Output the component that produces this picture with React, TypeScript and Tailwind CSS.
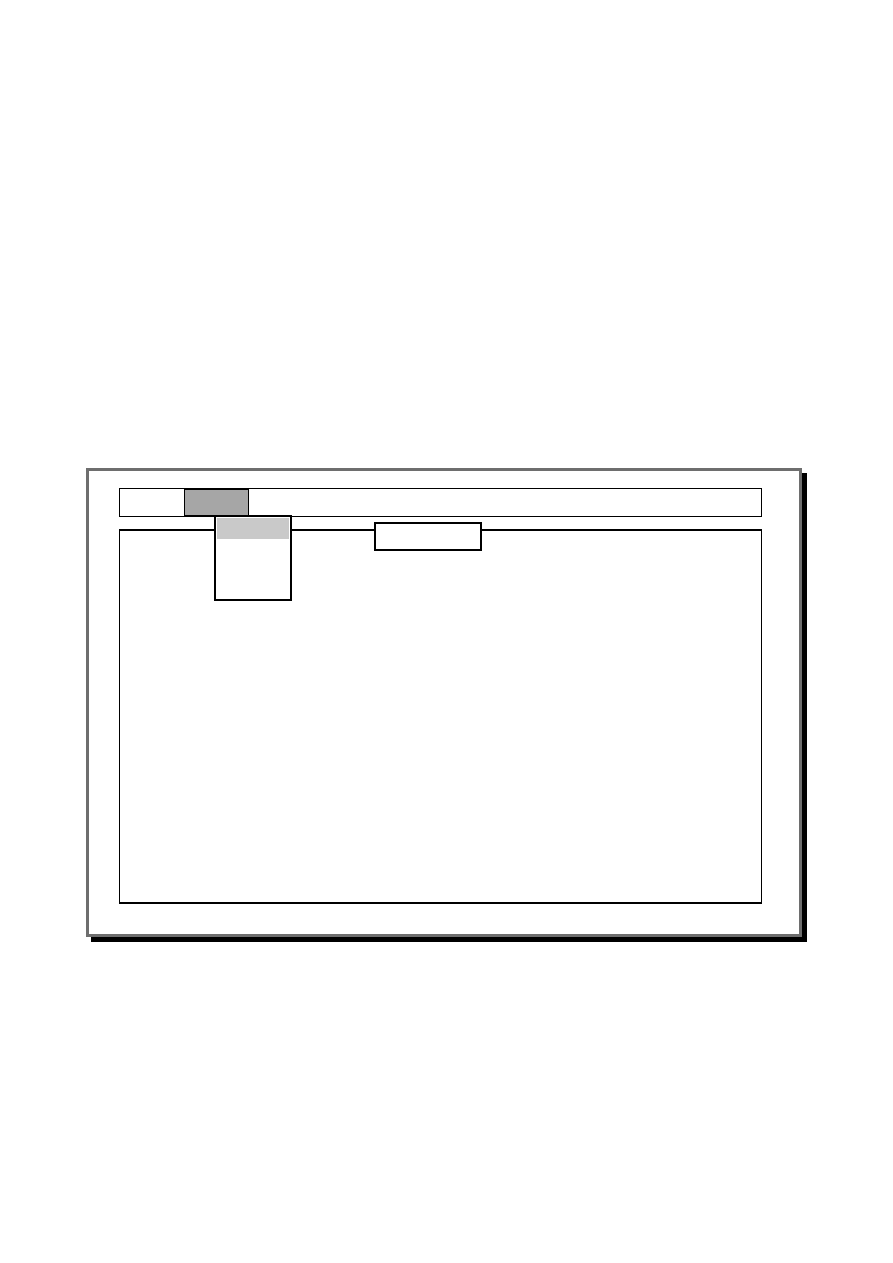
export default function App() {
  return (
    <div className="min-h-screen w-full bg-white pt-[468px] pl-[86px]" style={{ fontFamily: '"Liberation Sans", Arial, sans-serif' }}>
      <div className="box-border w-[716px] h-[469px] border-[3px] border-[#6e6e6e] bg-white shadow-[5px_5px_0_0_#000] pl-[30px] pt-[17px]">
        <div className="relative flex box-border w-[643px] h-[29px] border border-black bg-white">
          <div className="ml-[64px] box-border w-[65px] h-full border border-black bg-[#a6a6a6]" />
          <div className="absolute left-[94px] top-[26px] z-10 box-border w-[78px] h-[86px] border-2 border-black bg-white p-px">
            <div className="h-[21px] w-full bg-[#c9c9c9]" />
          </div>
        </div>
        <div className="relative mt-[12px] box-border w-[643px] h-[375px] border-x border-y-2 border-black bg-white">
          <div className="absolute left-[254px] top-[-9px] box-border w-[108px] h-[29px] border-2 border-black bg-white" />
        </div>
      </div>
    </div>
  );
}
